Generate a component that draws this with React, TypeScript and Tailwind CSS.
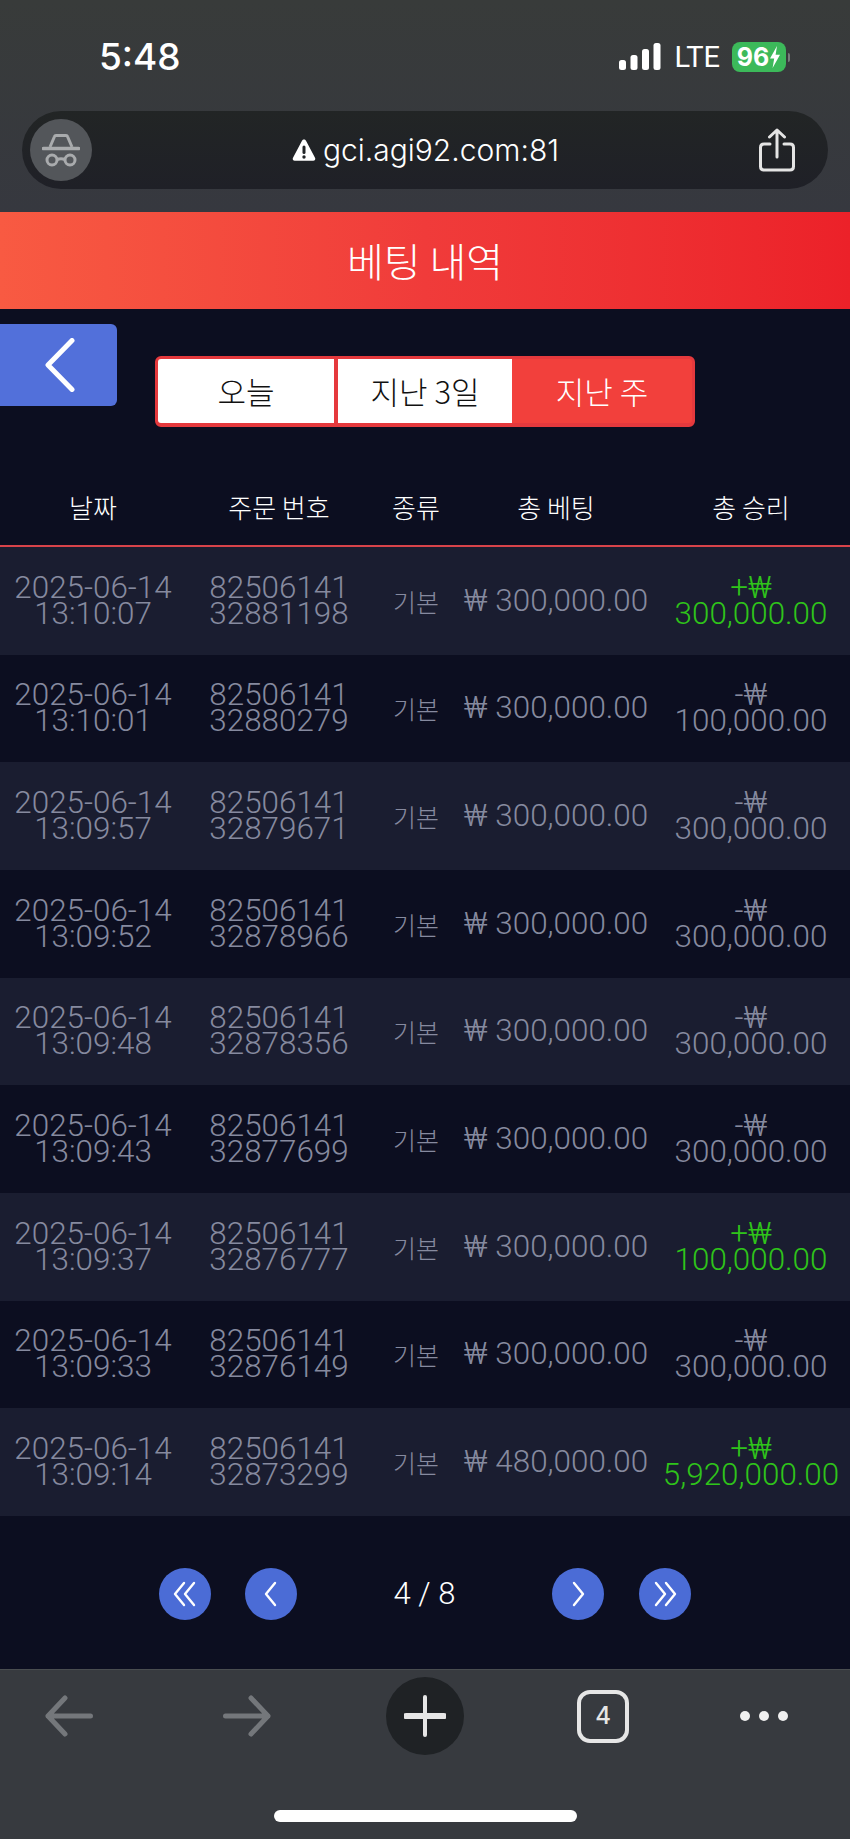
const ROWS = [
  { date: '13:10:07', id: '32881198', bet: '300,000.00', sign: '+', win: '300,000.00' },
  { date: '13:10:01', id: '32880279', bet: '300,000.00', sign: '-', win: '100,000.00' },
  { date: '13:09:57', id: '32879671', bet: '300,000.00', sign: '-', win: '300,000.00' },
  { date: '13:09:52', id: '32878966', bet: '300,000.00', sign: '-', win: '300,000.00' },
  { date: '13:09:48', id: '32878356', bet: '300,000.00', sign: '-', win: '300,000.00' },
  { date: '13:09:43', id: '32877699', bet: '300,000.00', sign: '-', win: '300,000.00' },
  { date: '13:09:37', id: '32876777', bet: '300,000.00', sign: '+', win: '100,000.00' },
  { date: '13:09:33', id: '32876149', bet: '300,000.00', sign: '-', win: '300,000.00' },
  { date: '13:09:14', id: '32873299', bet: '480,000.00', sign: '+', win: '5,920,000.00' },
];

const COLS = 'grid grid-cols-[186px_186px_88px_192px_198px] items-center text-center';

const PageButton = ({ d }: { d: string }) => (
  <div className="flex h-[52px] w-[52px] items-center justify-center rounded-full bg-[#4b6cd6]">
    <svg width="32" height="32" viewBox="0 0 32 32" fill="none" stroke="white" strokeWidth="2.4" strokeLinecap="round" strokeLinejoin="round">
      <path d={d} />
    </svg>
  </div>
);

const StatusBar = () => (
  <div className="flex h-[111px] items-start justify-between pl-[99px] pr-[60px] pt-[37px]">
    <span className="text-[37px] leading-[40px] font-medium text-white font-['Inter',sans-serif]">5:48</span>
    <div className="mt-[4px] flex items-center">
      <svg width="42" height="28" viewBox="0 0 42 28" fill="white">
        <rect x="0" y="17" width="7" height="10" rx="2.5" />
        <rect x="11.5" y="12" width="7" height="15" rx="2.5" />
        <rect x="23" y="6" width="7" height="21" rx="2.5" />
        <rect x="34.5" y="0" width="7" height="27" rx="2.5" />
      </svg>
      <span className="ml-[13px] text-[29px] leading-[32px] font-normal text-white font-['Roboto',sans-serif]">LTE</span>
      <div className="ml-[12px] flex h-[30px] w-[54px] items-center justify-center rounded-[8px] bg-[#3cb95a]">
        <span className="text-[25px] leading-none font-bold text-white font-['Inter',sans-serif]">96</span>
        <svg width="12" height="22" viewBox="0 0 12 22" fill="white"><path d="M8 0 1 12.5h4.2L3.6 22 11 8.8H6.6z" /></svg>
      </div>
      <div className="ml-[2px] h-[9px] w-[2px] rounded-r-full bg-[#777a7a]" />
    </div>
  </div>
);

const UrlBar = () => (
  <div className="mx-[22px] flex h-[78px] items-center justify-between rounded-full bg-gradient-to-b from-[#222525] to-[#1f2027] pl-[8px] pr-[33px]">
    <div className="flex h-[62px] w-[62px] items-center justify-center rounded-full bg-[#53565a]">
      <svg width="38" height="34" viewBox="0 0 38 34" fill="none" stroke="#a9abad" strokeWidth="3">
        <path d="M8 14 12.500 3.500c.2-.6.7-1 1.500-1h10c.8 0 1.300.4 1.500 1L30 14" strokeLinejoin="round" />
        <path d="M1.500 15.500h35" strokeWidth="3.600" strokeLinecap="round" />
        <circle cx="10" cy="27" r="5" />
        <circle cx="28" cy="27" r="5" />
        <path d="M15 26.500c2.500-1 5.500-1 8 0" />
      </svg>
    </div>
    <div className="flex items-center">
      <svg width="24" height="24" viewBox="0 0 24 24">
        <path d="M12 1.500c.9 0 1.500.5 2 1.300l9 17c.8 1.500 0 3-1.800 3H2.800c-1.800 0-2.600-1.500-1.800-3l9-17c.5-.8 1.100-1.300 2-1.300z" fill="white" />
        <rect x="10.500" y="7.500" width="3" height="8.500" rx="1.500" fill="#222527" />
        <circle cx="12" cy="19" r="1.700" fill="#222527" />
      </svg>
      <span className="ml-[7px] text-[30px] leading-[36px] font-light text-white font-['Inter',sans-serif]">gci.agi92.com:81</span>
    </div>
    <svg width="36" height="44" viewBox="0 0 36 44" fill="none" stroke="#e4e4e4" strokeWidth="3" strokeLinecap="round" strokeLinejoin="round">
      <path d="M18 29V2M10.500 9 18 2l7.500 7" />
      <path d="M11 16H5c-2.200 0-3.500 1.300-3.500 3.500v19C1.500 40.700 2.800 42 5 42h26c2.200 0 3.500-1.300 3.500-3.500v-19C34.500 17.300 33.200 16 31 16h-6" />
    </svg>
  </div>
);

const Row = ({ row, index }: { row: (typeof ROWS)[number]; index: number }) => {
  const plus = row.sign === '+';
  return (
    <div className={`${COLS} h-[107.67px] font-light text-[#868a9f] ${index % 2 === 0 ? 'bg-[#1a1d30]' : 'bg-[#0c0e20]'}`}>
      <div className="text-[31.4px] leading-[26px]">
        <div>2025-06-14</div>
        <div>{row.date}</div>
      </div>
      <div className="text-[31.4px] leading-[26px]">
        <div>82506141</div>
        <div>{row.id}</div>
      </div>
      <div className="text-[25px] leading-[26px] font-['Noto_Sans_CJK_KR',sans-serif]">기본</div>
      <div className="text-[31.4px] leading-[26px] whitespace-nowrap">₩ {row.bet}</div>
      <div className={`text-[31.4px] leading-[26px] whitespace-nowrap ${plus ? 'text-[#2fc41a]' : ''}`}>
        <div>{row.sign}₩</div>
        <div>{row.win}</div>
      </div>
    </div>
  );
};

const App = () => {
  return (
    <div className="flex h-[1839px] w-[850px] flex-col overflow-hidden bg-[#0c0e20] font-['Roboto','Noto_Sans_CJK_KR',sans-serif]">
      <div className="h-[212px] shrink-0 bg-gradient-to-b from-[#383b3a] to-[#36383f]">
        <StatusBar />
        <UrlBar />
      </div>

      <div className="flex h-[97px] shrink-0 items-center justify-center bg-gradient-to-r from-[#f85a42] via-[#f03b3a] to-[#ec2129] pb-[2px] text-[40px] font-light text-white font-['Noto_Sans_CJK_KR',sans-serif]">
        베팅 내역
      </div>

      <div className="flex flex-1 flex-col">
        <div className="flex items-start pt-[15px]">
          <div className="flex h-[82px] w-[117px] items-center rounded-r-[6px] bg-[#5270da] pl-[44px]">
            <svg width="32" height="54" viewBox="0 0 32 54" fill="none" stroke="white" strokeWidth="5" strokeLinecap="round" strokeLinejoin="round">
              <path d="M28 2.500 4 27l24 24.500" />
            </svg>
          </div>
          <div className="ml-[38px] mt-[32px] flex h-[71px] w-[540px] rounded-[6px] border-[3px] border-[#e5393d] bg-[#e5393d] pb-[1px] text-[31px] font-light font-['Noto_Sans_CJK_KR',sans-serif]">
            <div className="flex w-[176px] items-center justify-center rounded-l-[3px] bg-white text-[#111]">오늘</div>
            <div className="ml-[4px] flex w-[174px] items-center justify-center bg-white text-[#111]">지난 3일</div>
            <div className="flex flex-1 items-center justify-center rounded-r-[3px] bg-[#f2403c] text-white">지난 주</div>
          </div>
        </div>

        <div className={`${COLS} mt-[41px] h-[79px] border-b-[2px] border-[#d8434a] text-[26px] font-light text-white font-['Noto_Sans_CJK_KR',sans-serif]`}>
          <div>날짜</div>
          <div>주문 번호</div>
          <div>종류</div>
          <div>총 베팅</div>
          <div>총 승리</div>
        </div>

        {ROWS.map((row, i) => (
          <Row key={row.id} row={row} index={i} />
        ))}

        <div className="mt-[52px] flex items-center justify-center">
          <PageButton d="M15 5 6 16l9 11M25 5l-9 11 9 11" />
          <div className="ml-[34px]">
            <PageButton d="M20 5l-9 11 9 11" />
          </div>
          <div className="w-[255px] text-center text-[31px] font-light text-white">4 / 8</div>
          <PageButton d="M12 5l9 11-9 11" />
          <div className="ml-[35px]">
            <PageButton d="M7 5l9 11-9 11M17 5l9 11-9 11" />
          </div>
        </div>
      </div>

      <div className="flex h-[170px] shrink-0 flex-col border-t border-[#4a4d50] bg-[#373a3f]">
        <div className="flex items-center pl-[45px] pt-[7px]">
          <svg width="48" height="42" viewBox="0 0 48 42" fill="none" stroke="#74777b" strokeWidth="5" strokeLinecap="round" strokeLinejoin="round">
            <path d="M45.500 21H3M20 3 3 21l17 18" />
          </svg>
          <svg className="ml-[130px]" width="48" height="42" viewBox="0 0 48 42" fill="none" stroke="#74777b" strokeWidth="5" strokeLinecap="round" strokeLinejoin="round">
            <path d="M2.500 21H45M28 3l17 18-17 18" />
          </svg>
          <div className="ml-[115px] flex h-[78px] w-[78px] items-center justify-center rounded-full bg-[#1f2225]">
            <svg width="42" height="42" viewBox="0 0 42 42" fill="none" stroke="#e6e6e6" strokeLinecap="round">
              <path d="M21 2v38" strokeWidth="4" />
              <path d="M2 21h38" strokeWidth="6" />
            </svg>
          </div>
          <div className="ml-[113px] flex h-[53px] w-[52px] items-center justify-center rounded-[13px] border-[4px] border-[#e6e6e6] text-[24px] font-medium text-[#e6e6e6] font-['Inter',sans-serif]">
            4
          </div>
          <div className="ml-[111px] flex items-center gap-[9px]">
            <div className="h-[10px] w-[10px] rounded-full bg-[#f0f0f0]" />
            <div className="h-[10px] w-[10px] rounded-full bg-[#f0f0f0]" />
            <div className="h-[10px] w-[10px] rounded-full bg-[#f0f0f0]" />
          </div>
        </div>
        <div className="mx-auto mb-[17px] mt-auto h-[12px] w-[303px] rounded-full bg-white" />
      </div>
    </div>
  );
};

export default App;
